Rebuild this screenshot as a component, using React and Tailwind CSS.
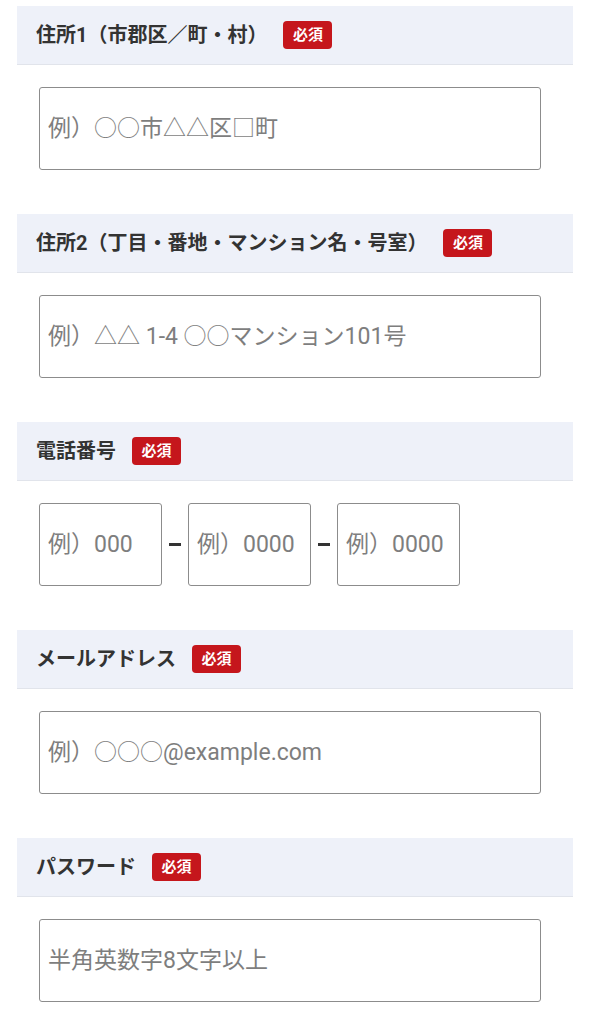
const fields = [
  { label: '住所1（市郡区／町・村）', placeholder: '例）○○市△△区□町' },
  { label: '住所2（丁目・番地・マンション名・号室）', placeholder: '例）△△ 1-4 ○○マンション101号' },
  { label: '電話番号', phone: true },
  { label: 'メールアドレス', placeholder: '例）○○○@example.com' },
  { label: 'パスワード', placeholder: '半角英数字8文字以上' },
];

const inputCls =
  'h-[83px] rounded-[3px] border border-[#8c8c8c] bg-white pl-[8px] text-[23px] text-[#333] ' +
  'placeholder:text-[#7e7e7e] outline-none';

const Field = ({ label, placeholder, phone }) => (
  <section>
    {/* Header */}
    <div className="flex h-[59px] items-center border-b border-[#e1e4eb] bg-[#eef1f9] pl-[19px]">
      <h2 className="text-[20px] font-bold text-[#333]">{label}</h2>
      <span className="ml-4 flex h-[28px] w-[49px] items-center justify-center rounded-[4px]
                       bg-[#c5161c] text-[15px] font-bold text-white">
        必須
      </span>
    </div>

    {/* Input */}
    <div className="mt-[22px] pl-[22px] pr-[32px]">
      {phone ? (
        <div className="flex items-center">
          <input className={inputCls + ' w-[123px]'} placeholder="例）000" />
          <span className="mx-[7px] h-[3px] w-[12px] bg-[#333]" />
          <input className={inputCls + ' w-[123px]'} placeholder="例）0000" />
          <span className="mx-[7px] h-[3px] w-[12px] bg-[#333]" />
          <input className={inputCls + ' w-[123px]'} placeholder="例）0000" />
        </div>
      ) : (
        <input className={inputCls + ' w-full'} placeholder={placeholder} />
      )}
    </div>
  </section>
);

export default function App() {
  return (
    <div className="min-h-screen bg-white px-[17px] pt-[6px]
                    font-['Roboto','Noto_Sans_CJK_JP',sans-serif]">
      <div className="flex flex-col gap-[44px]">
        {fields.map((f) => (
          <Field key={f.label} {...f} />
        ))}
      </div>
    </div>
  );
}
